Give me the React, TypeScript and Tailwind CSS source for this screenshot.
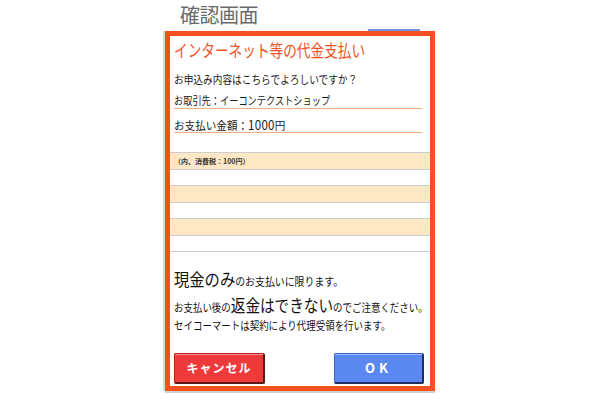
const jp = '[font-family:"Noto_Sans_CJK_JP","Noto_Sans",sans-serif]'

const rows = ['bg-[#fde7c5]', 'bg-white', 'bg-[#fde7c5]', 'bg-white', 'bg-[#fde7c5]', 'bg-white']

export default function App() {
  return (
    <div className={`w-[600px] h-[400px] bg-white ${jp}`}>
      <div className="ml-[165px] w-[270px] flex flex-col">
        {/* Page title */}
        <div className="h-[31px] flex">
          <div className="ml-[15px] mt-[2px] text-[20px] leading-[26px] text-[#6a6a6a] tracking-[-0.5px]">確認画面</div>
          <div className="ml-auto mr-[15px] self-end w-[52px] h-[2px] bg-[#6f93e2]" />
        </div>

        {/* Dialog */}
        <div className="h-[360px] border-[5px] border-[#f4511e] bg-white flex flex-col shadow-[0_2px_0_#cfcfcf,-2px_0_0_#d8d8d8]">
          <div className="h-[28px] pl-[4px] flex items-center">
            <span className="inline-block origin-left scale-x-[0.78] text-[17.5px] leading-[20px] text-[#f05326] whitespace-nowrap">
              インターネット等の代金支払い
            </span>
          </div>

          <div className="h-[30px] pl-[4px] flex items-center">
            <span className="inline-block origin-left scale-x-[0.88] text-[11px] text-[#1a1a1a] whitespace-nowrap">
              お申込み内容はこちらでよろしいですか？
            </span>
          </div>

          <div className="h-[15px] ml-[4px] mr-[8px] border-b border-[#f6ad80] flex items-center">
            <span className="inline-block origin-left scale-x-[0.8] text-[11.5px] text-[#1a1a1a] whitespace-nowrap">
              お取引先：イーコンテクストショップ
            </span>
          </div>

          <div className="h-[24px] pt-[9px] ml-[4px] mr-[8px] border-b border-[#f6ad80] flex items-center">
            <span className="inline-block origin-left scale-x-[0.92] text-[11.5px] text-[#1a1a1a] whitespace-nowrap">
              お支払い金額：<span className="text-[12.5px] tracking-[0.3px]">1000</span>円
            </span>
          </div>

          {/* Striped rows */}
          <div className="mt-[19px] border-t border-[#cdcdcd]">
            {rows.map((bg, i) => (
              <div key={i} className={`h-[16.5px] border-b border-[#cdcdcd] ${bg} pl-[4px] flex items-center`}>
                {i === 0 && (
                  <span className="text-[7px] font-bold text-[#333] whitespace-nowrap">（内、消費税：100円）</span>
                )}
              </div>
            ))}
          </div>

          {/* Notes */}
          <div className="mt-[17px] h-[22px] pl-[4px] flex items-end text-[#111] whitespace-nowrap">
            <span className="inline-block origin-left scale-x-[0.9]">
              <span className="text-[17px] leading-[22px]">現金のみ</span>
              <span className="text-[11px]">のお支払いに限ります。</span>
            </span>
          </div>
          <div className="mt-[6px] h-[20px] pl-[4px] flex items-end text-[#111] whitespace-nowrap">
            <span className="inline-block origin-left scale-x-[0.86]">
              <span className="text-[11px]">お支払い後の</span>
              <span className="text-[17px] leading-[20px]">返金はできない</span>
              <span className="text-[11px]">のでご注意ください。</span>
            </span>
          </div>
          <div className="h-[16px] pl-[4px] flex items-center text-[#111] whitespace-nowrap">
            <span className="inline-block origin-left scale-x-[0.86] text-[11px]">
              セイコーマートは契約により代理受領を行います。
            </span>
          </div>

          {/* Buttons */}
          <div className="mt-[20px] flex px-[4px] justify-between pr-[6px]">
            <button className="w-[91px] h-[31px] rounded-[2px] bg-[#ee3a3a] border border-[#b02626] border-b-[2px] border-r-[2px] border-b-[#5a1a1a] border-r-[#5a1a1a] text-white text-[12px] font-bold tracking-[1px] shadow-[inset_0_1px_0_#ff8a8a]">
              キャンセル
            </button>
            <button className="w-[90px] h-[31px] rounded-[2px] bg-[#5b88f0] border border-[#3d64c2] border-b-[2px] border-r-[2px] border-b-[#1f2f5a] border-r-[#1f2f5a] text-white text-[13px] font-bold tracking-[4px] shadow-[inset_0_1px_0_#9cb8ff]">
              OK
            </button>
          </div>
        </div>
      </div>
    </div>
  )
}
